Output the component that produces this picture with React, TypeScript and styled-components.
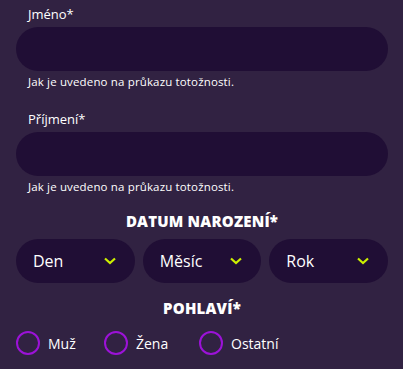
import styled, { createGlobalStyle } from "styled-components";

const Global = createGlobalStyle`
  html, body {
    margin: 0;
    padding: 0;
    background: #312242;
  }
  body {
    font-family: "Open Sans", "DejaVu Sans", sans-serif;
    color: #ffffff;
  }
`;

const Form = styled.div`
  width: 403px;
  height: 369px;
  box-sizing: border-box;
  padding: 5px 15px 0 16px;
  background: #312242;
  overflow: hidden;
`;

const Field = styled.div<{ $gap: number }>`
  display: flex;
  flex-direction: column;
  margin-bottom: ${(p) => p.$gap}px;
`;

const Label = styled.label`
  font-size: 13px;
  font-weight: 500;
  padding-left: 12px;
  line-height: 18px;
  margin-bottom: 4px;
`;

const Input = styled.div`
  height: 44px;
  border-radius: 22px;
  background: #200e35;
`;

const Hint = styled.div`
  font-size: 11.5px;
  letter-spacing: 0.15px;
  line-height: 14px;
  padding-left: 12px;
  margin-top: 4px;
`;

const Heading = styled.div`
  text-align: center;
  font-size: 15px;
  font-weight: 800;
  line-height: 20px;
  letter-spacing: 0.2px;
  margin-bottom: 8px;
`;

const Selects = styled.div`
  display: grid;
  grid-template-columns: repeat(3, 1fr);
  gap: 8px;
  margin-bottom: 15px;
`;

const Select = styled.div`
  height: 44px;
  border-radius: 22px;
  background: #200e35;
  display: flex;
  align-items: center;
  justify-content: space-between;
  padding: 0 19px 0 17px;
  font-size: 16px;
`;

const Radios = styled.div`
  display: flex;
  align-items: center;
  padding-top: 5px;
`;

const Radio = styled.div<{ $width: number }>`
  display: flex;
  align-items: center;
  gap: 8px;
  width: ${(p) => p.$width}px;
  font-size: 14px;
`;

const Circle = styled.span`
  width: 20px;
  height: 20px;
  border-radius: 50%;
  border: 2px solid #9c12d8;
`;

const Chevron = () => (
  <svg width="12" height="8" viewBox="0 0 12 8">
    <path d="M1 1.5 L6 6 L11 1.5" fill="none" stroke="#cdf000" strokeWidth="2.2" />
  </svg>
);

export default function App() {
  return (
    <>
      <Global />
      <Form>
        <Field $gap={21}>
          <Label>Jméno*</Label>
          <Input />
          <Hint>Jak je uvedeno na průkazu totožnosti.</Hint>
        </Field>
        <Field $gap={17}>
          <Label>Příjmení*</Label>
          <Input />
          <Hint>Jak je uvedeno na průkazu totožnosti.</Hint>
        </Field>
        <Heading>DATUM NAROZENÍ*</Heading>
        <Selects>
          <Select>
            Den <Chevron />
          </Select>
          <Select>
            Měsíc <Chevron />
          </Select>
          <Select>
            Rok <Chevron />
          </Select>
        </Selects>
        <Heading>POHLAVÍ*</Heading>
        <Radios>
          <Radio $width={88}>
            <Circle />
            Muž
          </Radio>
          <Radio $width={95}>
            <Circle />
            Žena
          </Radio>
          <Radio $width={100}>
            <Circle />
            Ostatní
          </Radio>
        </Radios>
      </Form>
    </>
  );
}
